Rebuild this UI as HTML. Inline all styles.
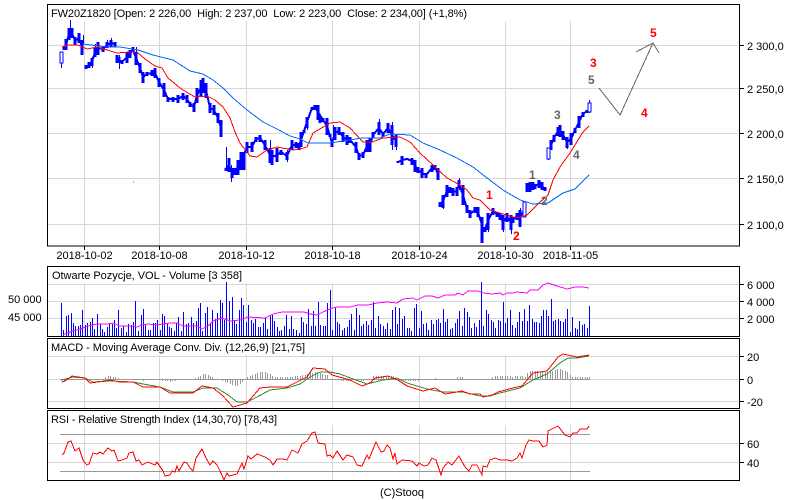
<!DOCTYPE html>
<html><head><meta charset="utf-8"><title>FW20Z1820</title>
<style>
html,body{margin:0;padding:0;background:#fff}
svg{display:block}
text{font-family:"Liberation Sans",Arial,sans-serif;font-size:11px;fill:#000;white-space:pre}
.n{font-size:12px;font-weight:bold}
.r{fill:#f00}.g{fill:#666}
</style></head><body>
<svg width="800" height="500" viewBox="0 0 800 500" xmlns="http://www.w3.org/2000/svg">
<rect width="800" height="500" fill="#fff"/>
<g fill="none" shape-rendering="crispEdges">
<path stroke="#d8d8d8" d="M84.5 21V246M159.5 21V246M246.5 21V246M332.5 21V246M419.5 21V246M505.5 21V246M570.5 21V246M48 45.5H739M48 88.5H739M48 133.5H739M48 178.5H739M48 224.5H739"/>
<path stroke="#d8d8d8" d="M84.5 283V336M159.5 283V336M246.5 283V336M332.5 283V336M419.5 283V336M505.5 283V336M570.5 283V336M48 284.5H739M48 301.5H739M48 318.5H739"/>
<path stroke="#d8d8d8" d="M84.5 355V408M159.5 355V408M246.5 355V408M332.5 355V408M419.5 355V408M505.5 355V408M570.5 355V408M48 356.5H739M48 379.5H739M48 401.5H739"/>
<path stroke="#d8d8d8" d="M84.5 425V480M159.5 425V480M246.5 425V480M332.5 425V480M419.5 425V480M505.5 425V480M570.5 425V480M48 443.5H739M48 462.5H739"/>
<!-- candles -->
<path stroke="#0000ff" stroke-width="1" d="M61.5 52V68M70.5 20V30M83.5 35V44M95.5 44V50M92.5 57V68M107.5 40V48M111.5 38V44M119.5 55V69M136.5 47V65M143.5 72V83M226.5 147V170M231.5 165V182M270.5 140V163M247.5 142V150M287.5 150V162M307.5 117V130M333.5 125V140M392.5 122V150M396.5 135V150M443.5 195V209M459.5 178V190M482.5 217V243M488.5 213V232M503.5 215V232M511.5 215V234M520.5 208V227M548.5 148V160M567.5 137V149M589.5 100V113M379.5 119V128"/>
<g stroke="#0000ff" stroke-width="2">
<polyline points="64,48 66,45 69,34 72,33 75,41 79,38 82,47"/>
<polyline points="86,67 89,65 92,62 95,52 98,48 103,49 107,45 111,43 115,44"/>
<polyline points="117,59 122,62 127,57 130,54 133,50 136,58 140,68 143,77 147,74 152,73 155,73 159,82 164,90 168,99 173,99 178,99 183,96 187,99 190,104 194,107 197,95 201,88 203,85 206,90 210,108 214,110 218,118 221,128"/>
<polyline points="226,169 229,165 232,173 235,171 238,167 241,161 247,147 252,147 256,139 260,138 265,145 270,155 272,157 277,155 281,152 287,156 292,145 296,145 299,146 301,140 304,131 307,122 312,108 315,107 318,112 323,120 327,126 332,143 335,133 339,131 343,137 347,140 350,140 356,147 359,156 363,155 367,146 370,145 373,135 379,128 383,134 388,128 392,135 396,141"/>
<polyline points="398,162 402,160 407,159 412,161 415,166 418,170 422,173 426,175 432,168 435,167 438,174"/>
<polyline points="440,204 443,201 447,191 450,190 453,192 457,191 459,184 463,195 467,209 470,214 475,210 478,212 482,225"/>
<polyline points="485,229 488,221 493,211 497,214 500,216 503,222 507,217 511,222 513,220 517,216 520,218 524,210"/>
<polyline points="527,187 530,187 533,186 535,186 539,184 542,186 545,189"/>
<polyline points="551,145 554,138 558,131 560,131 563,135 567,142 571,139 575,130 579,122 583,114 587,111"/>
</g>
<path stroke="#0000ff" stroke-width="3" d="M64 46V50M66 39V50M69 28V40M72 28V38M75 37V45M79 33V43M82 40V55M86 65V69M89 62V68M92 58V66M95 47V57M98 42V55M103 46V52M107 42V48M111 40V47M115 42V47M117 55V63M119 57V63M122 60V64M127 52V63M130 50V58M133 47V52M136 52V65M140 63V73M143 72V83M147 72V76M152 70V76M155 68V78M159 78V87M164 83V97M168 97V102M173 97V102M178 95V103M183 93V100M187 95V103M190 102V107M194 103V112M197 88V103M201 80V97M203 78V93M206 83V98M210 103V113M214 105V115M218 113V123M221 120V137M226 168V171M229 158V172M232 168V178M235 168V175M238 160V175M241 152V170M244 152V170M247 142V153M252 142V152M256 137V142M260 135V142M265 140V150M270 148V163M272 150V165M277 148V162M281 150V155M287 152V160M290 148V150M292 140V150M296 142V148M299 143V150M301 132V147M304 130V133M307 117V128M312 107V110M315 105V110M318 105V120M320 116V123M323 118V122M327 118V135M330 134V137M332 140V147M335 127V140M339 127V135M343 132V142M347 135V145M350 137V143M356 142V153M359 153V160M363 152V158M367 140V152M370 138V152M373 132V138M379 122V135M383 132V137M388 123V133M392 125V145M396 135V147M398 161V163M402 156V165M407 158V160M412 158V165M415 160V172M418 167V173M422 168V178M426 173V178M432 165V172M435 165V170M438 168V180M440 202V207M443 195V208M447 185V197M450 187V193M453 188V196M457 187V196M459 180V188M463 185V205M467 205V213M470 210V218M475 207V213M478 207V217M482 217V243M485 227V232M488 213V230M493 208V215M497 212V217M500 213V220M503 215V230M507 213V222M511 215V230M513 217V223M517 213V220M520 210V227M524 202V217M527 183V192M530 182V192M533 182V190M535 184V189M539 180V188M542 182V190M545 187V191M551 140V150M554 135V142M558 127V136M560 125V137M563 131V140M567 137V148M571 133V145M575 128V133M579 116V128M583 112V117M587 110V113"/>
<rect x="60" y="52" width="3" height="11" fill="#fff" stroke="#0000ff"/>
<rect x="547" y="148" width="3" height="11" fill="#fff" stroke="#0000ff"/>
<rect x="588" y="103" width="3" height="9" fill="#fff" stroke="#0000ff"/>
<rect x="523" y="202" width="3" height="15" fill="#fff" stroke="#0000ff"/>
<!-- moving averages -->
<polyline stroke="#ff0000" points="62,47 68,45 78,45 87,49 98,47 107,50 117,53 130,52 137,52 145,59 155,66 162,68 168,78 180,88 188,93 195,97 207,96 215,100 223,107 230,118 235,132 240,143 250,156 257,157 267,150 277,147 293,150 300,149 307,147 313,133 330,123 340,122 350,128 363,142 372,142 383,138 400,137 410,142 420,153 433,165 447,178 460,185 467,190 473,198 480,200 490,210 503,214 517,218 527,215 540,202 548,195 553,180 560,167 570,153 578,140 583,132 589,126"/>
<polyline stroke="#0066ff" points="83,44 107,47 120,47 138,50 153,55 173,60 190,71 203,74 213,80 223,88 233,98 247,110 263,122 277,129 290,136 300,139 308,143 330,143 343,141 362,138 380,138 390,134 410,135 423,143 440,150 457,158 473,167 487,178 503,190 520,200 533,204 548,203 563,193 575,189 589,175"/>
<path stroke="#666" d="M133 182h1"/>
<polyline stroke="#666" points="599,88 620,115 653,43"/>
<polyline stroke="#666" points="636,52 653,43 659,53"/>
<!-- volume -->
<path stroke="#0000ff" d="M61.5 336V303M63.5 336V330M66.5 336V316M68.5 336V315M71.5 336V313M73.5 336V323M75.5 336V326M78.5 336V326M80.5 336V325M82.5 336V310M85.5 336V325M87.5 336V323M90.5 336V322M92.5 336V318M94.5 336V329M97.5 336V314M100.5 336V324M102.5 336V329M104.5 336V332M107.5 336V327M109.5 336V323M112.5 336V324M114.5 336V320M116.5 336V328M118.5 336V310M121.5 336V328M123.5 336V326M126.5 336V332M128.5 336V324M131.5 336V325M133.5 336V322M135.5 336V301M138.5 336V331M141.5 336V315M143.5 336V309M145.5 336V324M148.5 336V330M150.5 336V330M153.5 336V323M155.5 336V323M157.5 336V320M160.5 336V330M162.5 336V314M164.5 336V316M167.5 336V323M169.5 336V327M171.5 336V328M174.5 336V331M176.5 336V323M178.5 336V317M181.5 336V331M183.5 336V312M186.5 336V324M188.5 336V323M191.5 336V317M193.5 336V323M196.5 336V321M198.5 336V308M200.5 336V303M202.5 336V331M205.5 336V313M207.5 336V307M210.5 336V323M212.5 336V310M215.5 336V319M217.5 336V313M220.5 336V300M222.5 336V303M224.5 336V320M226.5 336V282M229.5 336V301M232.5 336V297M234.5 336V321M236.5 336V324M239.5 336V310M241.5 336V298M243.5 336V305M246.5 336V322M248.5 336V305M251.5 336V320M253.5 336V323M255.5 336V319M258.5 336V327M260.5 336V327M263.5 336V323M265.5 336V318M267.5 336V329M270.5 336V315M272.5 336V315M274.5 336V321M277.5 336V327M279.5 336V331M281.5 336V330M284.5 336V326M286.5 336V315M289.5 336V329M291.5 336V316M293.5 336V329M296.5 336V330M299.5 336V333M301.5 336V317M303.5 336V322M306.5 336V324M308.5 336V309M311.5 336V326M313.5 336V311M315.5 336V326M318.5 336V302M320.5 336V325M323.5 336V326M325.5 336V326M327.5 336V303M330.5 336V290M332.5 336V330M335.5 336V307M337.5 336V322M339.5 336V324M342.5 336V330M344.5 336V328M347.5 336V327M349.5 336V320M351.5 336V314M354.5 336V330M356.5 336V308M359.5 336V315M361.5 336V326M363.5 336V324M366.5 336V321M368.5 336V325M371.5 336V320M373.5 336V302M375.5 336V328M378.5 336V316M380.5 336V324M383.5 336V326M385.5 336V329M387.5 336V323M390.5 336V329M392.5 336V310M395.5 336V307M397.5 336V324M399.5 336V308M402.5 336V319M404.5 336V316M407.5 336V328M409.5 336V328M411.5 336V331M414.5 336V308M416.5 336V304M419.5 336V328M421.5 336V311M423.5 336V324M426.5 336V323M428.5 336V330M431.5 336V320M433.5 336V324M436.5 336V320M438.5 336V319M440.5 336V323M443.5 336V309M445.5 336V322M447.5 336V319M450.5 336V329M452.5 336V328M455.5 336V323M457.5 336V319M459.5 336V311M462.5 336V326M464.5 336V308M467.5 336V312M469.5 336V317M471.5 336V328M474.5 336V323M476.5 336V327M479.5 336V320M481.5 336V282M483.5 336V326M486.5 336V310M488.5 336V314M491.5 336V320M493.5 336V322M495.5 336V328M498.5 336V320M500.5 336V321M503.5 336V302M505.5 336V323M507.5 336V318M510.5 336V310M512.5 336V325M515.5 336V328M517.5 336V322M519.5 336V312M522.5 336V321M524.5 336V309M527.5 336V321M529.5 336V305M532.5 336V319M534.5 336V322M536.5 336V322M539.5 336V323M541.5 336V316M543.5 336V310M546.5 336V310M548.5 336V316M551.5 336V299M553.5 336V321M555.5 336V320M558.5 336V319M560.5 336V321M563.5 336V322M565.5 336V319M567.5 336V309M570.5 336V332M572.5 336V317M575.5 336V328M577.5 336V329M579.5 336V321M582.5 336V325M584.5 336V324M587.5 336V328M589.5 336V306"/>
<polyline stroke="#ff00ff" points="63,335 67,333 73,331 80,329 88,326 97,324 107,324 113,323 120,326 133,326 137,327 142,325 148,324 157,325 163,324 170,323 177,323 183,326 197,326 202,329 208,326 213,321 222,318 230,321 240,320 248,317 265,318 273,314 282,312 290,312 304,312 310,314 317,315 323,312 332,308 338,307 350,307 358,305 368,305 377,303 387,302 397,303 403,299 413,298 417,300 425,296 432,296 438,298 445,295 455,295 458,293 463,295 468,291 478,291 483,293 492,294 500,293 503,295 507,293 513,293 517,292 527,293 530,290 538,290 543,285 548,283 557,286 567,289 575,287 583,287 589,288"/>
<!-- MACD histogram -->
<path stroke="#999" d="M61.5 379v2M64.5 379v2M66.5 379v1M105.5 379v-2M108.5 379v-3M110.5 379v-3M113.5 379v-2M115.5 379v-2M118.5 379v-1M140.5 379v1M143.5 379v2M145.5 379v1M148.5 379v1M162.5 379v2M165.5 379v2M167.5 379v2M170.5 379v3M172.5 379v2M175.5 379v2M177.5 379v1M195.5 379v-1M198.5 379v-2M200.5 379v-3M203.5 379v-5M205.5 379v-5M208.5 379v-4M210.5 379v-3M212.5 379v-2M215.5 379v1M218.5 379v1M222.5 379v2M225.5 379v3M227.5 379v4M230.5 379v5M232.5 379v6M235.5 379v7M237.5 379v7M240.5 379v5M242.5 379v3M245.5 379v1M247.5 379v-2M250.5 379v-3M252.5 379v-4M255.5 379v-5M257.5 379v-6M260.5 379v-7M262.5 379v-7M265.5 379v-7M267.5 379v-6M270.5 379v-5M272.5 379v-3M275.5 379v-2M277.5 379v-2M280.5 379v-2M282.5 379v-2M285.5 379v-2M287.5 379v-2M290.5 379v-2M292.5 379v-2M295.5 379v-3M297.5 379v-3M300.5 379v-3M302.5 379v-4M305.5 379v-4M307.5 379v-5M310.5 379v-6M312.5 379v-6M315.5 379v-7M317.5 379v-7M320.5 379v-6M322.5 379v-5M325.5 379v-4M327.5 379v-4M333.5 379v1M336.5 379v1M338.5 379v1M341.5 379v2M343.5 379v2M346.5 379v2M348.5 379v2M351.5 379v2M353.5 379v1M356.5 379v1M358.5 379v1M361.5 379v2M363.5 379v2M373.5 379v-3M376.5 379v-3M378.5 379v-3M381.5 379v-3M383.5 379v-3M386.5 379v-3M388.5 379v-3M391.5 379v-3M393.5 379v-3M400.5 379v1M403.5 379v2M405.5 379v2M408.5 379v2M410.5 379v2M413.5 379v2M415.5 379v2M418.5 379v2M420.5 379v1M423.5 379v1M426.5 379v1M435.5 379v-1M441.5 379v1M444.5 379v1M457.5 379v-2M460.5 379v-2M462.5 379v-2M470.5 379v1M473.5 379v1M482.5 379v1M485.5 379v1M487.5 379v1M492.5 379v-2M495.5 379v-3M497.5 379v-3M500.5 379v-3M502.5 379v-3M505.5 379v-3M507.5 379v-3M510.5 379v-3M512.5 379v-2M515.5 379v-3M517.5 379v-3M520.5 379v-3M522.5 379v-3M525.5 379v-2M527.5 379v-6M530.5 379v-8M532.5 379v-8M535.5 379v-8M537.5 379v-8M540.5 379v-7M542.5 379v-7M545.5 379v-7M547.5 379v-7M550.5 379v-8M552.5 379v-8M555.5 379v-9M557.5 379v-10M560.5 379v-10M562.5 379v-9M565.5 379v-8M567.5 379v-7M570.5 379v-4M572.5 379v-2M575.5 379v-2M577.5 379v-2M580.5 379v-2M582.5 379v-2M585.5 379v-2M587.5 379v-2M589.5 379v-2"/>
<path stroke="#999" d="M60 379.5H590"/>
<polyline stroke="#2e8b2e" points="62,380 73,377 85,378 93,382 110,381 133,382 143,384 160,387 173,392 193,392 203,388 217,388 228,395 237,402 247,402 257,397 270,390 287,388 300,384 310,377 320,372 330,372 340,374 353,379 367,384 383,380 397,378 407,383 427,389 443,392 463,392 480,396 490,396 500,393 520,388 533,380 547,374 560,363 568,358 577,358 589,356"/>
<polyline stroke="#ff0000" points="62,382 65,381 72,376 78,377 85,378 90,383 98,382 110,380 120,382 133,382 143,387 160,387 170,393 193,393 202,386 213,388 222,395 233,407 247,403 260,388 270,387 287,387 297,382 307,377 313,368 325,369 332,375 350,380 362,386 370,383 375,378 388,376 398,380 407,386 423,391 435,388 445,394 457,392 462,391 470,394 480,394 483,397 492,395 498,392 513,388 522,386 533,373 547,371 558,357 563,354 577,357 589,355"/>
<!-- RSI -->
<path stroke="#999" d="M60 434.5H590M60 471.5H590"/>
<polyline stroke="#ff0000" points="62,455 64,453 68,442 71,441 75,451 79,448 83,460 87,465 89,464 93,453 97,454 100,452 103,454 108,448 112,451 114,450 118,461 122,460 127,458 129,453 133,452 136,461 139,460 142,465 148,462 155,465 157,462 163,471 165,476 170,475 172,471 175,472 177,466 179,471 184,462 187,463 190,468 193,471 196,458 202,449 206,458 210,465 213,461 217,465 220,471 224,480 227,473 229,476 237,474 242,463 244,469 248,456 251,459 257,454 265,457 270,460 273,465 277,459 283,459 287,460 292,450 298,453 302,444 307,441 312,433 315,432 318,443 325,444 327,456 330,455 333,458 337,451 343,460 347,455 353,457 357,465 362,466 367,455 369,459 376,442 381,452 384,451 387,445 390,448 393,459 395,453 397,464 402,460 412,461 417,466 419,463 424,466 428,465 432,458 436,460 441,475 443,468 448,462 452,465 459,456 465,467 469,471 472,465 477,465 482,475 483,466 487,467 490,460 495,458 500,460 507,460 512,461 517,458 520,453 522,458 526,445 529,440 533,441 539,441 543,447 547,445 548,431 558,426 565,435 570,437 573,433 577,433 580,429 587,429 589,426"/>
<!-- frames -->
<rect x="47.5" y="4.5" width="692" height="241.5" stroke="#000"/>
<rect x="47.5" y="266.5" width="692" height="70" stroke="#000"/>
<rect x="47.5" y="338.5" width="692" height="70" stroke="#000"/>
<rect x="47.5" y="410.5" width="692" height="70" stroke="#000"/>
<path stroke="#000" d="M84.5 246v4M159.5 246v4M246.5 246v4M332.5 246v4M419.5 246v4M505.5 246v4M570.5 246v4M739 45.5h5M739 88.5h5M739 133.5h5M739 178.5h5M739 224.5h5M739 284.5h5M739 301.5h5M739 318.5h5M739 356.5h5M739 379.5h5M739 401.5h5M739 443.5h5M739 462.5h5"/>
</g>
<text x="51" y="17" textLength="416" lengthAdjust="spacing">FW20Z1820 [Open: 2 226,00  High: 2 237,00  Low: 2 223,00  Close: 2 234,00] (+1,8%)</text>
<text x="52" y="279" textLength="190" lengthAdjust="spacing">Otwarte Pozycje, VOL - Volume [3 358]</text>
<text x="51" y="351" textLength="254" lengthAdjust="spacing">MACD - Moving Average Conv. Div. (12,26,9) [21,75]</text>
<text x="51" y="423" textLength="226" lengthAdjust="spacing">RSI - Relative Strength Index (14,30,70) [78,43]</text>
<g text-anchor="middle">
<text x="84.5" y="259">2018-10-02</text><text x="159.5" y="259">2018-10-08</text><text x="246.5" y="259">2018-10-12</text><text x="332.5" y="259">2018-10-18</text><text x="419.5" y="259">2018-10-24</text><text x="505.5" y="259">2018-10-30</text><text x="570.5" y="259">2018-11-05</text>
<text x="402" y="496">(C)Stooq</text>
</g>
<text x="747" y="50">2 300,0</text><text x="747" y="93">2 250,0</text><text x="747" y="138">2 200,0</text><text x="747" y="183">2 150,0</text><text x="747" y="229">2 100,0</text>
<text x="747" y="289">6 000</text><text x="747" y="306">4 000</text><text x="747" y="323">2 000</text>
<text x="747" y="361">20</text><text x="747" y="384">0</text><text x="747" y="406">-20</text>
<text x="747" y="448">60</text><text x="747" y="467">40</text>
<text x="8" y="303">50 000</text><text x="8" y="321">45 000</text>
<text class="n r" x="486" y="199">1</text><text class="n r" x="513" y="240">2</text><text class="n r" x="590" y="67">3</text><text class="n r" x="641" y="117">4</text><text class="n r" x="650" y="37">5</text>
<text class="n g" x="529" y="179">1</text><text class="n g" x="541" y="205">2</text><text class="n g" x="554" y="119">3</text><text class="n g" x="573" y="159">4</text><text class="n g" x="588" y="84">5</text>
</svg>
</body></html>
